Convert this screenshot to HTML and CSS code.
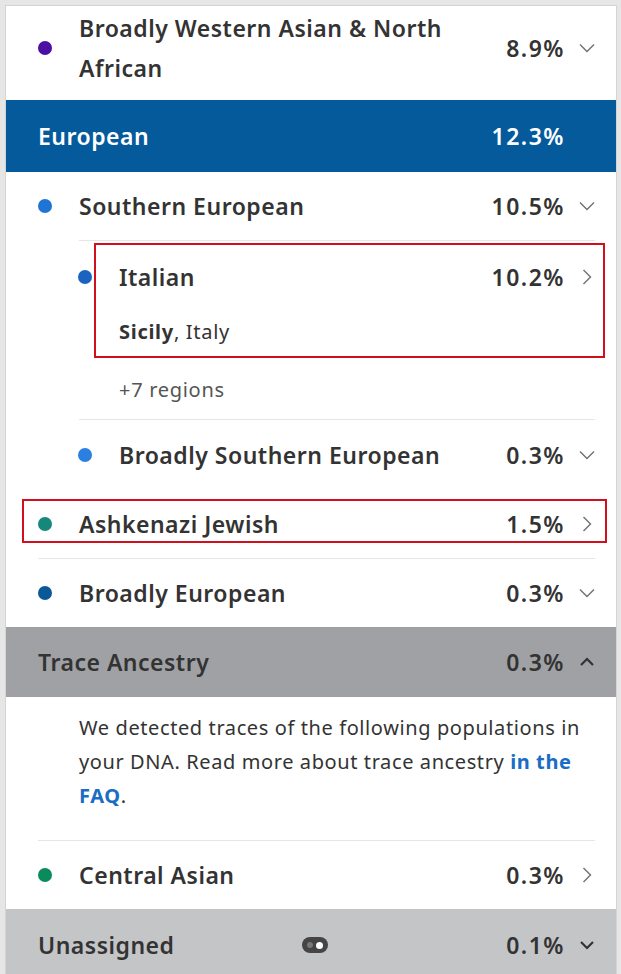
FILE: index.html
```html
<!DOCTYPE html>
<html>
<head>
    <meta charset="UTF-8">
    <title>Ancestry Composition</title>
    <link rel="stylesheet" href="styles.css">
</head>
<body>
    <div class="panel">
        <div class="row row-tall">
            <span class="dot dot-purple"></span>
            <span class="name">Broadly Western Asian &amp; North African</span>
            <span class="pct">8.9%</span>
            <svg class="chev" viewBox="0 0 16 16"><path d="M1 4.5l7 7 7-7"/></svg>
        </div>

        <div class="group-head head-blue">
            <span class="name">European</span>
            <span class="pct">12.3%</span>
            <span class="chev"></span>
        </div>

        <div class="row">
            <span class="dot dot-blue"></span>
            <span class="name">Southern European</span>
            <span class="pct">10.5%</span>
            <svg class="chev" viewBox="0 0 16 16"><path d="M1 4.5l7 7 7-7"/></svg>
        </div>
        <div class="sep sep-sub"></div>

        <div class="sub-block">
            <div class="row sub-row row-italian">
                <span class="dot dot-italian"></span>
                <span class="name">Italian</span>
                <span class="pct">10.2%</span>
                <svg class="chev" viewBox="0 0 16 16"><path d="M4.5 1l7 7-7 7"/></svg>
            </div>
            <div class="region"><b>Sicily</b>, Italy</div>
            <div class="more">+7 regions</div>
            <div class="mark mark-italian"></div>
        </div>
        <div class="sep sep-sub"></div>

        <div class="row sub-row row-plus">
            <span class="dot dot-blue-light"></span>
            <span class="name">Broadly Southern European</span>
            <span class="pct">0.3%</span>
            <svg class="chev" viewBox="0 0 16 16"><path d="M1 4.5l7 7 7-7"/></svg>
        </div>

        <div class="row row-plus">
            <span class="dot dot-teal"></span>
            <span class="name">Ashkenazi Jewish</span>
            <span class="pct">1.5%</span>
            <svg class="chev" viewBox="0 0 16 16"><path d="M4.5 1l7 7-7 7"/></svg>
            <div class="mark mark-ashkenazi"></div>
        </div>
        <div class="sep"></div>

        <div class="row">
            <span class="dot dot-navy"></span>
            <span class="name">Broadly European</span>
            <span class="pct">0.3%</span>
            <svg class="chev" viewBox="0 0 16 16"><path d="M1 4.5l7 7 7-7"/></svg>
        </div>

        <div class="group-head head-gray">
            <span class="name">Trace Ancestry</span>
            <span class="pct">0.3%</span>
            <svg class="chev chev-bold" viewBox="0 0 16 16"><path d="M2 11l6-6 6 6"/></svg>
        </div>

        <p class="trace-text">We detected traces of the following populations in your DNA. Read more about trace ancestry <a href="#">in the FAQ</a>.</p>
        <div class="sep"></div>

        <div class="row">
            <span class="dot dot-green"></span>
            <span class="name">Central Asian</span>
            <span class="pct">0.3%</span>
            <svg class="chev" viewBox="0 0 16 16"><path d="M4.5 1l7 7-7 7"/></svg>
        </div>

        <div class="group-head head-light">
            <span class="name">Unassigned</span>
            <span class="toggle"><span class="toggle-off"></span><span class="toggle-on"></span></span>
            <span class="pct">0.1%</span>
            <svg class="chev chev-bold" viewBox="0 0 16 16"><path d="M2 5l6 6 6-6"/></svg>
        </div>
    </div>
</body>
</html>
```

FILE: styles.css
```css
body {
    font-family: 'Noto Sans', 'Liberation Sans', sans-serif;
    margin: 0;
    padding: 5px 4px 0 5px;
    background-color: #e6e6e6;
    color: #333;
    overflow: hidden;
}
.panel {
    background-color: #fff;
    border: 1px solid #d4d4d4;
    border-bottom: none;
    min-height: 1000px;
}
.row {
    position: relative;
    display: flex;
    align-items: center;
    min-height: 68px;
    padding: 0 21px 0 32px;
}
.row-plus {
    min-height: 69px;
}
.row-tall {
    padding-top: 2px;
    padding-bottom: 12px;
}
.row-tall .name {
    line-height: 40px;
}
.sub-row {
    padding-left: 72px;
}
.row-italian {
    min-height: 72px;
}
.dot {
    flex: none;
    width: 14px;
    height: 14px;
    border-radius: 50%;
    margin-right: 27px;
}
.dot-purple { background-color: #4b0fa3; }
.dot-blue { background-color: #1f74d6; }
.dot-italian { background-color: #1b63c0; }
.dot-blue-light { background-color: #2b7fe0; }
.dot-teal { background-color: #17877c; }
.dot-navy { background-color: #0b5896; }
.dot-green { background-color: #0b8a5c; }
.name {
    flex: 1;
    margin-right: 24px;
    font-size: 23px;
    font-weight: 600;
    letter-spacing: 0.5px;
    line-height: 36px;
}
.pct {
    font-size: 23px;
    font-weight: 600;
    letter-spacing: 1.5px;
    line-height: 36px;
}
.chev {
    flex: none;
    width: 16px;
    height: 16px;
    margin-left: 14px;
    fill: none;
    stroke: #707070;
    stroke-width: 1.4;
}
.chev-bold {
    stroke: #333;
    stroke-width: 2.2;
}
.group-head {
    display: flex;
    align-items: center;
    height: 70px;
    padding: 0 21px 0 32px;
}
.head-blue {
    height: 72px;
    background-color: #045a9b;
    color: #fff;
}
.head-gray {
    background-color: #a0a1a4;
}
.head-light {
    height: 72px;
    background-color: #c4c5c7;
}
.sep {
    height: 1px;
    background-color: #e6e6e6;
    margin: 0 21px 0 32px;
}
.sep-sub {
    margin-left: 73px;
}
.sub-block {
    position: relative;
}
.region {
    margin-top: 5px;
    padding-left: 113px;
    font-size: 20px;
    letter-spacing: 0.7px;
    line-height: 28px;
}
.more {
    margin-top: 30px;
    margin-bottom: 15px;
    padding-left: 113px;
    font-size: 20px;
    letter-spacing: 0.7px;
    line-height: 28px;
    color: #555;
}
.mark {
    position: absolute;
    border: 2px solid #d0101c;
    pointer-events: none;
}
.mark-italian {
    top: 2px;
    left: 88px;
    right: 11px;
    height: 111px;
}
.mark-ashkenazi {
    top: 10px;
    left: 16px;
    right: 9px;
    height: 40px;
}
.trace-text {
    margin: 0;
    padding: 14px 36px 27px 73px;
    font-size: 20px;
    letter-spacing: 0.6px;
    line-height: 34px;
}
.trace-text a {
    color: #1a6cc4;
    font-weight: 700;
    text-decoration: none;
}
.toggle {
    display: flex;
    align-items: center;
    justify-content: space-between;
    width: 26px;
    height: 16px;
    padding: 0 5px;
    box-sizing: border-box;
    border-radius: 8px;
    background-color: #454545;
    margin-right: 178px;
}
.toggle-off {
    width: 6px;
    height: 6px;
    border-radius: 50%;
    background-color: #777;
}
.toggle-on {
    width: 7px;
    height: 7px;
    border-radius: 50%;
    background-color: #fff;
}
```
